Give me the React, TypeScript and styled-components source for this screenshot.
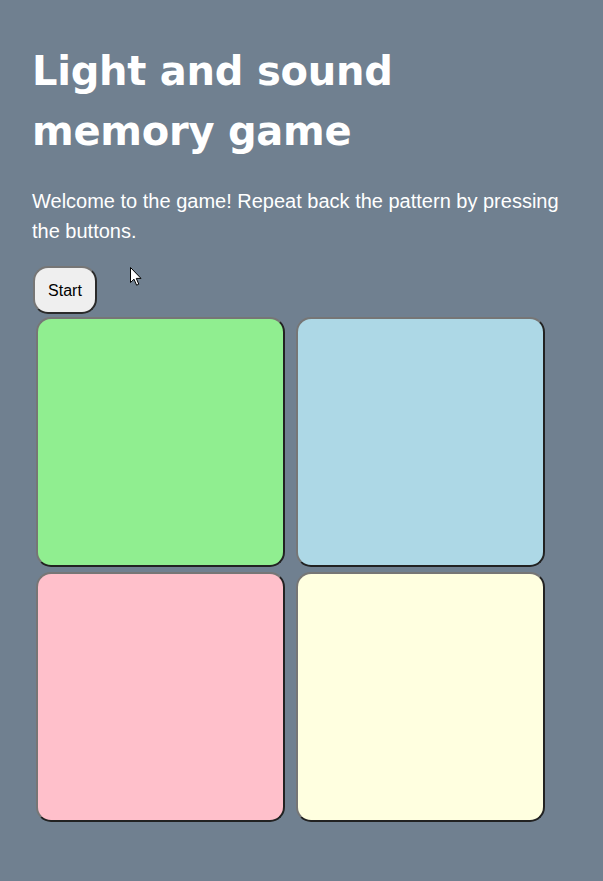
import React from "react";
import styled, { createGlobalStyle } from "styled-components";

const Global = createGlobalStyle`
  html, body { margin: 0; padding: 0; background: #708090; }
  body { color: #ffffff; font-family: "Liberation Sans", Arial, sans-serif; }
`;

const Page = styled.main`
  position: relative;
  min-height: 881px;
  box-sizing: border-box;
  padding: 41px 32px 0 32px;
  display: flex;
  flex-direction: column;
  align-items: flex-start;
`;

const Title = styled.h1`
  margin: 0;
  font-family: "DejaVu Sans", Verdana, sans-serif;
  font-weight: bold;
  font-size: 40px;
  line-height: 60px;
  letter-spacing: -0.25px;
  width: 420px;
`;

const Intro = styled.p`
  margin: 25px 0 0 0;
  font-size: 20px;
  line-height: 30px;
  width: 540px;
`;

const StartButton = styled.button`
  margin: 20px 0 0 1px;
  box-sizing: border-box;
  height: 48px;
  width: 64px;
  padding: 2px 0 0 0;
  font-family: "Liberation Sans", Arial, sans-serif;
  font-size: 16px;
  color: #000;
  background: #efefef;
  border: 2px solid;
  border-color: #767676 #2a2a2a #2a2a2a #767676;
  border-radius: 15px;
`;

const Board = styled.div`
  margin: 3px 0 0 4px;
  display: grid;
  grid-template-columns: 249px 249px;
  grid-auto-rows: 250px;
  column-gap: 11px;
  row-gap: 5px;
`;

const Pad = styled.button<{ $color: string }>`
  box-sizing: border-box;
  width: 249px;
  height: 250px;
  padding: 0;
  background: ${(p) => p.$color};
  border: 2px solid;
  border-color: #767676 #222 #222 #767676;
  border-radius: 15px;
`;

const Cursor = styled.svg`
  position: absolute;
  left: 130px;
  top: 267px;
`;

export default function App() {
  return (
    <>
      <Global />
      <Page>
        <Title>Light and sound memory game</Title>
        <Intro>
          Welcome to the game! Repeat back the pattern by pressing the buttons.
        </Intro>
        <StartButton>Start</StartButton>
        <Board>
          <Pad $color="lightgreen" />
          <Pad $color="lightblue" />
          <Pad $color="pink" />
          <Pad $color="lightyellow" />
        </Board>
        <Cursor width="14" height="20" viewBox="0 0 14 20">
          <path
            d="M0.5 0.5 L0.5 15.5 L4 12.2 L6.6 18.2 L8.8 17.2 L6.3 11.4 L11 11.4 Z"
            fill="#fff"
            stroke="#000"
            strokeWidth="1"
            strokeLinejoin="miter"
          />
        </Cursor>
      </Page>
    </>
  );
}
